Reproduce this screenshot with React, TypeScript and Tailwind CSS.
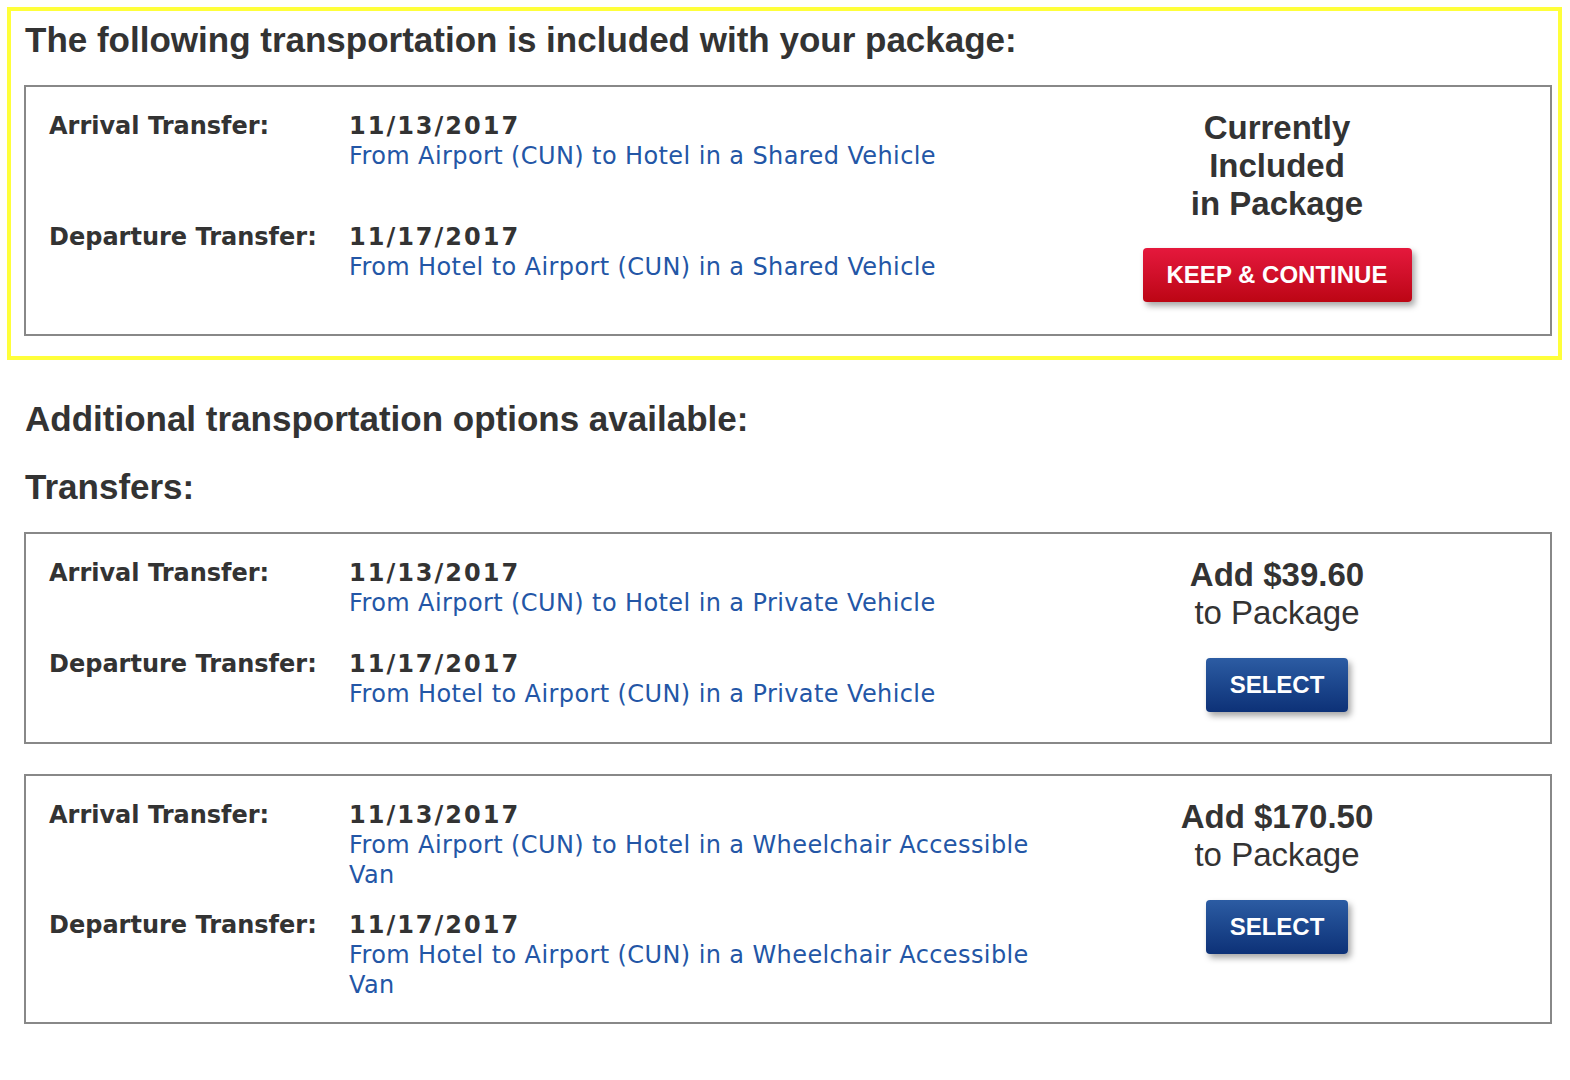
import React from 'react';

interface Transfer {
  label: string;
  date: string;
  route: string;
}

interface TransferOption {
  transfers: Transfer[];
  price?: string;
}

const included: Transfer[] = [
  { label: 'Arrival Transfer:', date: '11/13/2017', route: 'From Airport (CUN) to Hotel in a Shared Vehicle' },
  { label: 'Departure Transfer:', date: '11/17/2017', route: 'From Hotel to Airport (CUN) in a Shared Vehicle' },
];

const options: TransferOption[] = [
  {
    price: '$39.60',
    transfers: [
      { label: 'Arrival Transfer:', date: '11/13/2017', route: 'From Airport (CUN) to Hotel in a Private Vehicle' },
      { label: 'Departure Transfer:', date: '11/17/2017', route: 'From Hotel to Airport (CUN) in a Private Vehicle' },
    ],
  },
  {
    price: '$170.50',
    transfers: [
      { label: 'Arrival Transfer:', date: '11/13/2017', route: 'From Airport (CUN) to Hotel in a Wheelchair Accessible Van' },
      { label: 'Departure Transfer:', date: '11/17/2017', route: 'From Hotel to Airport (CUN) in a Wheelchair Accessible Van' },
    ],
  },
];

const verdana = "font-['Verdana','DejaVu_Sans',sans-serif]";
const arial = "font-['Liberation_Sans',Arial,sans-serif]";

function TransferBox({ transfers, children }: { transfers: Transfer[]; children: React.ReactNode }) {
  return (
    <div className="border-2 border-[#888888] pt-[24px] pb-[22px] pl-[23px] pr-[45px] grid grid-cols-[300px_700px_1fr] gap-y-[20px]">
      {transfers.map((t, i) => (
        <React.Fragment key={i}>
          <div className={`${verdana} text-[24px] leading-[30px] font-bold text-[#333333]`} style={{ gridRow: i + 1, gridColumn: 1 }}>
            {t.label}
          </div>
          <div className={`${verdana} text-[24px] leading-[30px]`} style={{ gridRow: i + 1, gridColumn: 2 }}>
            <div className="font-bold text-[#333333] tracking-[2px]">{t.date}</div>
            <div className="text-[#2356a6] tracking-[0.4px]">{t.route}</div>
          </div>
        </React.Fragment>
      ))}
      <div className={`${arial} row-span-2 col-start-3 row-start-1 -mt-[2px] flex flex-col items-center text-[#333333]`}>
        {children}
      </div>
    </div>
  );
}

export default function App() {
  return (
    <div className={`${arial} bg-white min-h-[1080px] pt-[7px] pl-[7px]`}>
      {/* Included package */}
      <div className="w-[1555px] border-4 border-[#ffff3a] pl-[13px] pr-[6px] pt-[10px] pb-[20px]">
        <h2 className="pl-[1px] text-[35px] leading-[38px] font-bold text-[#333333]">
          The following transportation is included with your package:
        </h2>
        <div className="mt-[26px]">
          <TransferBox transfers={included}>
            <div className="text-[33px] leading-[38px] font-bold text-center">
              Currently
              <br />
              Included
              <br />
              in Package
            </div>
            <button className="mt-[25px] mb-[10px] h-[54px] w-[269px] rounded-[4px] bg-gradient-to-b from-[#e5183c] to-[#bc0513] text-white text-[24px] font-bold shadow-[3px_4px_6px_rgba(0,0,0,0.35)]">
              KEEP &amp; CONTINUE
            </button>
          </TransferBox>
        </div>
      </div>

      {/* Additional options */}
      <div className="pl-[17px] w-[1545px]">
        <h2 className="mt-[40px] pl-[1px] text-[35px] leading-[38px] font-bold text-[#333333]">
          Additional transportation options available:
        </h2>
        <h2 className="mt-[30px] pl-[1px] text-[35px] leading-[38px] font-bold text-[#333333]">Transfers:</h2>
        <div className="mt-[26px] flex flex-col gap-[30px]">
          {options.map((opt, i) => (
            <TransferBox key={i} transfers={opt.transfers}>
              <div className="text-[33px] leading-[38px] text-center">
                <div className="font-bold">Add {opt.price}</div>
                <div>to Package</div>
              </div>
              <button className="mt-[26px] mb-[8px] h-[54px] w-[142px] rounded-[4px] bg-gradient-to-b from-[#2c5ca3] to-[#0d3177] text-white text-[24px] font-bold shadow-[3px_4px_6px_rgba(0,0,0,0.35)]">
                SELECT
              </button>
            </TransferBox>
          ))}
        </div>
      </div>
    </div>
  );
}
